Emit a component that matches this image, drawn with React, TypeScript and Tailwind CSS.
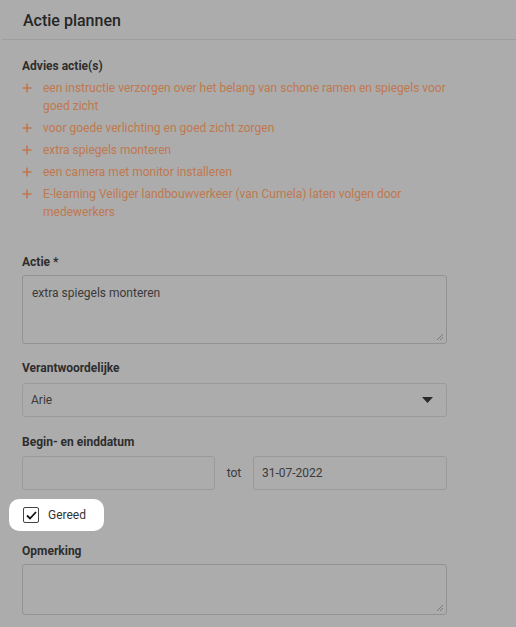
import React from "react";

const advies = [
  "een instructie verzorgen over het belang van schone ramen en spiegels voor goed zicht",
  "voor goede verlichting en goed zicht zorgen",
  "extra spiegels monteren",
  "een camera met monitor installeren",
  "E-learning Veiliger landbouwverkeer (van Cumela) laten volgen door medewerkers",
];

function Plus() {
  return (
    <svg width="10" height="10" viewBox="0 0 10 10" className="shrink-0 mt-[4px]">
      <path d="M5 0.5V9.5M0.5 5H9.5" stroke="#c0784e" strokeWidth="1.6" />
    </svg>
  );
}

function Resize() {
  return (
    <svg width="8" height="8" viewBox="0 0 8 8" className="absolute right-[2px] bottom-[2px]">
      <path d="M7 1L1 7M7 4L4 7" stroke="#7a7a7a" strokeWidth="1" />
    </svg>
  );
}

export default function App() {
  return (
    <div
      className="w-[516px] h-[627px] bg-[#acacac] overflow-hidden text-[#333]"
      style={{ fontFamily: "Roboto, 'Liberation Sans', sans-serif" }}
    >
      <div className="h-[40px] flex items-center pl-[22px] border-b border-[#9e9e9e] ml-[2px] -mb-px">
        <h1 className="text-[16px] font-medium text-[#262626] -ml-[1px] leading-none pt-[2px]">Actie plannen</h1>
      </div>
      <div className="pl-[22px] w-[447px] pt-[19px]">
        <div className="text-[12px] font-bold text-[#2e2e2e] leading-[16px]">Advies actie(s)</div>
        <ul className="mt-[5px] flex flex-col gap-[4px]">
          {advies.map((a) => (
            <li key={a} className="flex gap-[11px] text-[12px] leading-[18px] text-[#c0784e]">
              <Plus />
              <span>{a}</span>
            </li>
          ))}
        </ul>

        <div className="mt-[33px] text-[12px] font-bold text-[#2e2e2e] leading-[16px]">Actie *</div>
        <div className="relative mt-[5px] h-[69px] border border-[#929292] rounded-[3px] px-[9px] pt-[9px] text-[12px] text-[#3a3a3a] leading-[16px]">
          extra spiegels monteren
          <Resize />
        </div>

        <div className="mt-[16px] text-[12px] font-bold text-[#2e2e2e] leading-[16px]">Verantwoordelijke</div>
        <div className="mt-[7px] h-[34px] border border-[#9a9a9a] rounded-[3px] px-[8px] flex items-center justify-between text-[12px] text-[#3a3a3a]">
          <span>Arie</span>
          <svg width="11" height="6" viewBox="0 0 11 6" className="mr-[5px]">
            <path d="M0 0H11L5.5 6Z" fill="#2a2a2a" />
          </svg>
        </div>

        <div className="mt-[17px] text-[12px] font-bold text-[#2e2e2e] leading-[16px]">Begin- en einddatum</div>
        <div className="mt-[6px] flex items-center">
          <div className="w-[193px] h-[34px] border border-[#9a9a9a] rounded-[3px]" />
          <span className="w-[38px] text-center text-[12px] text-[#3a3a3a]">tot</span>
          <div className="flex-1 h-[34px] border border-[#9a9a9a] rounded-[3px] px-[8px] flex items-center text-[12px] text-[#3a3a3a]">
            31-07-2022
          </div>
        </div>
      </div>

      <div className="ml-[9px] mt-[9px] w-[95px] h-[32px] bg-white rounded-[10px] flex items-center pl-[14px]">
        <div className="w-[16px] h-[16px] border-[1.5px] border-[#444] rounded-[2px] flex items-center justify-center">
          <svg width="11" height="9" viewBox="0 0 11 9">
            <path d="M1 4.5L4 7.5L10 1" stroke="#111" strokeWidth="1.8" fill="none" />
          </svg>
        </div>
        <span className="ml-[9px] text-[12px] text-[#333]">Gereed</span>
      </div>

      <div className="pl-[22px] w-[447px]">
        <div className="mt-[12px] text-[12px] font-bold text-[#2e2e2e] leading-[16px]">Opmerking</div>
        <div className="relative mt-[5px] h-[51px] border border-[#929292] rounded-[3px]">
          <Resize />
        </div>
      </div>
    </div>
  );
}
